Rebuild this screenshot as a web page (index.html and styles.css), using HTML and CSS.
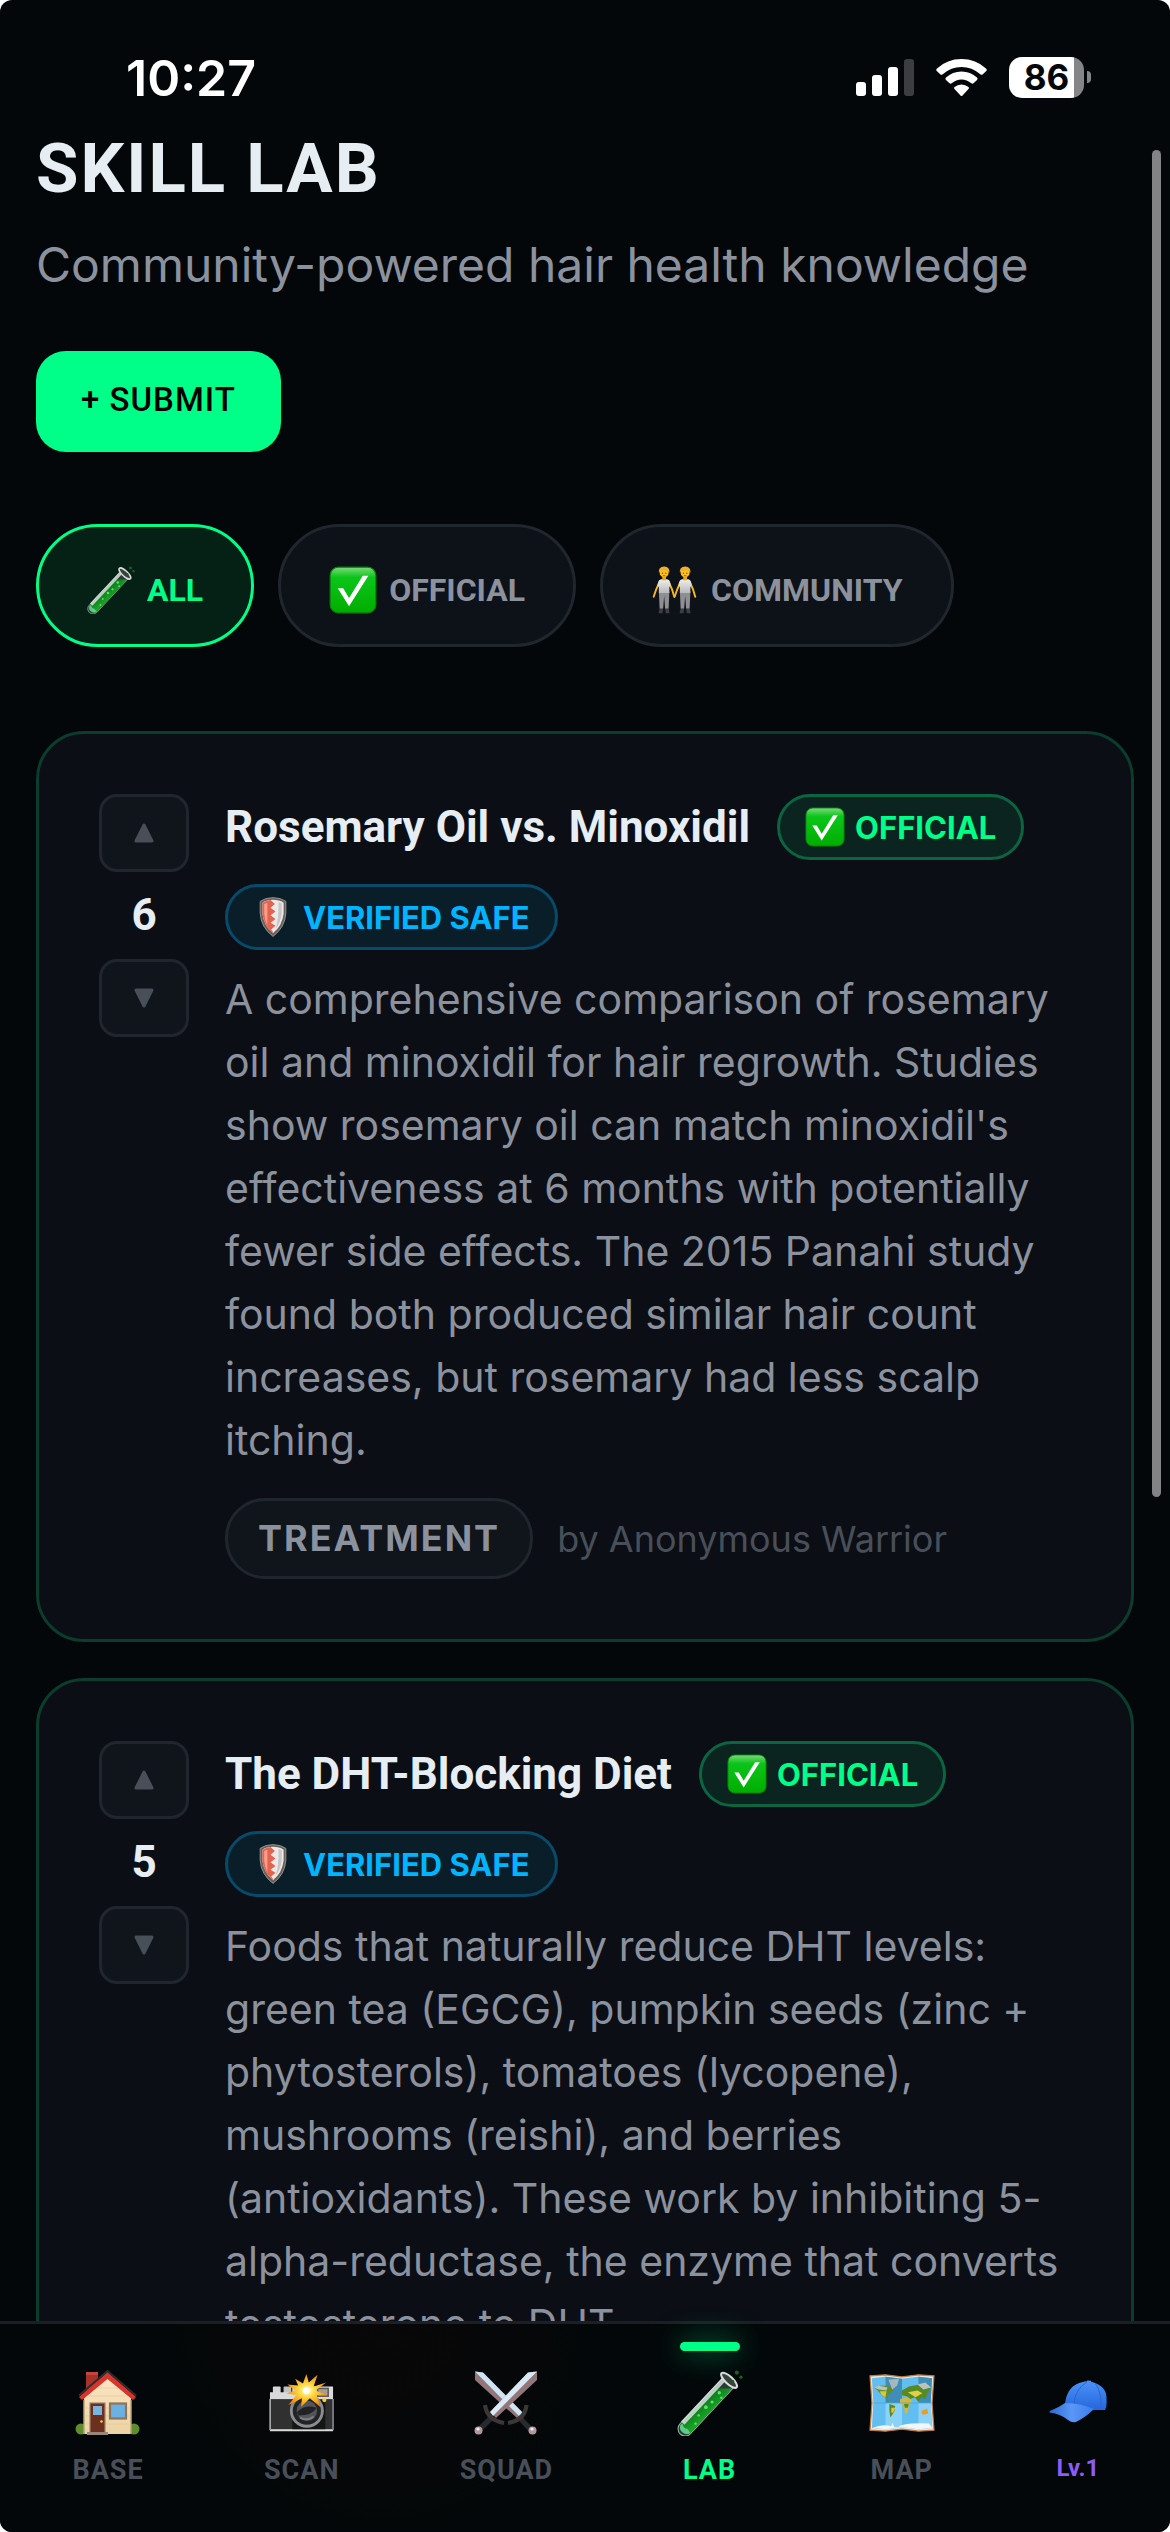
FILE: index.html
```html
<!DOCTYPE html>
<html lang="en">
<head>
  <meta charset="UTF-8">
  <meta name="viewport" content="width=device-width, initial-scale=1">
  <title>Skill Lab</title>
  <link rel="stylesheet" href="styles.css">
</head>
<body>
  <!-- icon sprite -->
  <svg class="sprite" aria-hidden="true">
    <defs>
      <linearGradient id="gGreen" x1="0" y1="0" x2="0" y2="1">
        <stop offset="0" stop-color="#7edb7e"/><stop offset="0.22" stop-color="#0cc51a"/><stop offset="1" stop-color="#00ad00"/>
      </linearGradient>
      <linearGradient id="gLiquid" x1="0" y1="0" x2="1" y2="1">
        <stop offset="0.3" stop-color="#066a20"/><stop offset="0.75" stop-color="#27d327"/>
      </linearGradient>
      <linearGradient id="gShirt" x1="0" y1="0" x2="0" y2="1">
        <stop offset="0" stop-color="#efefef"/><stop offset="1" stop-color="#b9b9bd"/>
      </linearGradient>
      <linearGradient id="gWall" x1="0" y1="0" x2="0" y2="1">
        <stop offset="0" stop-color="#fbe6c2"/><stop offset="1" stop-color="#ecd3a5"/>
      </linearGradient>
      <radialGradient id="gFlash">
        <stop offset="0" stop-color="#fff"/><stop offset="0.35" stop-color="#ffe04a"/><stop offset="1" stop-color="#f58a07"/>
      </radialGradient>
      <linearGradient id="gCap" x1="0" y1="0" x2="0" y2="1">
        <stop offset="0" stop-color="#4a92f7"/><stop offset="1" stop-color="#2566dc"/>
      </linearGradient>
      <linearGradient id="gBrim" x1="0" y1="0" x2="1" y2="0">
        <stop offset="0" stop-color="#2c69d6"/><stop offset="0.5" stop-color="#5b97f6"/><stop offset="1" stop-color="#3b7cec"/>
      </linearGradient>
    </defs>

    <symbol id="i-tube" viewBox="0 0 64 64">
      <path d="M44.9 7.2L2.9 52.2A7 7 0 0 0 13.1 61.8L55.1 16.8Z" fill="#2b3b35" stroke="#9fb5aa" stroke-width="1"/>
      <path d="M38 18H53.5L13 61A6.4 6.4 0 0 1 3.8 52.5Z" fill="url(#gLiquid)"/>
      <path d="M3.4 53A6.6 6.6 0 0 0 13 61L10 57Q6 57 5.5 52Z" fill="#62c98c"/>
      <path d="M5.5 51.5L45 9.5" stroke="#dfece4" stroke-width="4.5" opacity="0.8"/>
      <ellipse cx="50.5" cy="10" rx="10" ry="3.6" transform="rotate(43 50.5 10)" fill="#38413d" stroke="#dcdcdc" stroke-width="2"/>
      <g fill="#5ce25c"><circle cx="41" cy="22" r="1.7"/><circle cx="34" cy="31" r="1.5"/><circle cx="28" cy="36" r="1.8"/><circle cx="21" cy="44" r="1.2"/><circle cx="18" cy="52" r="1.2"/><circle cx="43" cy="27" r="1.2"/></g>
      <g fill="#1f5c27"><circle cx="58" cy="2.5" r="2"/><circle cx="62" cy="7" r="1.6"/><circle cx="54" cy="11" r="1.5"/></g>
    </symbol>

    <symbol id="i-check" viewBox="0 0 64 64">
      <rect x="1.5" y="1.5" width="61" height="61" rx="11" fill="url(#gGreen)" stroke="#087f0b" stroke-width="1.5"/>
      <path d="M11.7 29.7H19L26.7 42.7L45 13H52.5L26.7 53.5Z" fill="#fff"/>
    </symbol>

    <symbol id="i-person" viewBox="0 0 32 64">
      <path d="M10 20L5 31L1.5 41" fill="none" stroke="#f5b81d" stroke-width="2.6" stroke-linecap="round"/>
      <path d="M21 20L26 31L29 41" fill="none" stroke="#f5b81d" stroke-width="2.6" stroke-linecap="round"/>
      <path d="M8.5 34H22.5L21.5 57H16.8L15.5 40L14.2 57H9.5Z" fill="#8f8f93"/>
      <path d="M11.5 17.5H19.5Q23 17.5 24.5 26L22.5 28V36H8.5V28L6.5 26Q8 17.5 11.5 17.5Z" fill="url(#gShirt)"/>
      <path d="M9.5 57H14L13.5 63H8ZM17 57H21.5L23 63H17.5Z" fill="#3e3e42"/>
      <path d="M13 13H18V19H13Z" fill="#e9a71a"/>
      <circle cx="15.5" cy="9" r="6" fill="#fcc21b"/>
      <path d="M8.5 9Q7.5 1 15.5 0.5Q23.5 1 22.5 9Q20 4.5 15 6Q10 6 8.5 9Z" fill="#efae2e"/>
      <circle cx="13.3" cy="9.5" r="0.9" fill="#5a3a13"/><circle cx="17.7" cy="9.5" r="0.9" fill="#5a3a13"/>
      <path d="M13.8 13H17.2" stroke="#a2461d" stroke-width="1.2"/>
    </symbol>
    <symbol id="i-people" viewBox="0 0 64 64">
      <use href="#i-person" x="2" y="0" width="32" height="64"/>
      <use href="#i-person" x="30" y="0" width="32" height="64"/>
    </symbol>

    <symbol id="i-shield" viewBox="0 0 44 64">
      <path d="M22 1Q34 1 42.5 7V26Q41 49 22 63Q3 49 1.5 26V7Q10 1 22 1Z" fill="#66605c" stroke="#9c9791" stroke-width="1.5"/>
      <path d="M22 4.5Q32 4.5 39 9V26Q37 46 22 58Q7 46 5 26V9Q12 4.5 22 4.5Z" fill="#ece9e8"/>
      <path d="M18 4.8Q11 5.5 5 9V26Q7 46 22 58V56L19 52L26 46L18 41L26 35L18 29L26 23L18 17L25 11Z" fill="#e2634e"/>
      <path d="M8 11V27Q9 38 13 45V9Z" fill="#ff9c8c"/>
      <path d="M36 10V26Q34 42 26 51Q31 38 31 8Z" fill="#c9c6c6"/>
    </symbol>

    <symbol id="i-house" viewBox="0 0 66 66">
      <rect x="11" y="2" width="12" height="18" fill="#a83228"/><rect x="11" y="2" width="12" height="3" fill="#c4453a"/>
      <circle cx="6" cy="59" r="5.5" fill="#5d8d2c"/><circle cx="59" cy="59" r="5.5" fill="#5d8d2c"/>
      <path d="M32.5 7L56 28V64H9V28Z" fill="url(#gWall)"/>
      <path d="M9 30V64M56 30V64" stroke="#b99f77" stroke-width="1.5"/>
      <path d="M9 38H56M9 46H56M9 54H56M14 26H50M22 18H43" stroke="#e0c69b" stroke-width="0.6"/>
      <path d="M4 27L32.5 2L61 27L58 30L32.5 9L7 30Z" fill="#d8342c"/>
      <path d="M4 25.5L32.5 1L61 25.5" fill="none" stroke="#322c2d" stroke-width="2"/>
      <rect x="15" y="33" width="15" height="30" fill="#6d2f1e" stroke="#a18672" stroke-width="1.2"/>
      <rect x="18" y="36" width="9" height="9" fill="#78b6e2"/><circle cx="26.5" cy="51.5" r="1.3" fill="#ffc93b"/>
      <rect x="12" y="62" width="21" height="3" fill="#97877a"/>
      <rect x="35" y="33.5" width="16" height="15" fill="#6cb1e3" stroke="#8e7458" stroke-width="2.2"/>
    </symbol>

    <symbol id="i-camera" viewBox="0 0 68 66">
      <rect x="4" y="16" width="8" height="7" rx="1" fill="#d6d6d6"/><rect x="15" y="16" width="8" height="7" rx="1" fill="#c2c2c2"/>
      <path d="M1 22H24V16H66V62H1Z" fill="#d9dadb"/>
      <rect x="2" y="29" width="64" height="31" fill="#303031"/>
      <path d="M1 29V61M66 29V61" stroke="#909294" stroke-width="1.5"/>
      <rect x="24" y="30" width="34" height="30" fill="#151516"/>
      <circle cx="39" cy="41" r="16" fill="#222326" stroke="#8b8d90" stroke-width="3"/>
      <circle cx="39" cy="41" r="10.5" fill="#535559"/>
      <path d="M29 42Q38 34 49 38Q45 46 30 46Z" fill="#202226"/>
      <path d="M32 48Q39 52 46 47" stroke="#7b7e84" stroke-width="2" fill="none"/>
      <rect x="50" y="18" width="11" height="8" fill="#a79d91" stroke="#5b5753" stroke-width="1.5"/>
      <circle cx="57" cy="30" r="2.2" fill="#ffc93b"/>
      <path d="M38.5 3L41 12L50 4L46 16L59 12L48 20L60 25L49 25L53 37L42 28L33 37L34 28L20 35L28 25L18 23L27 20L19 14L30 15L27 8L35 13Z" fill="url(#gFlash)"/>
      <circle cx="38.5" cy="20.5" r="3.5" fill="#fff"/>
    </symbol>

    <symbol id="i-swords" viewBox="0 0 66 66">
      <path d="M2 1.5L10 2.5L51 44L44 48L2 10Z" fill="#927679"/>
      <path d="M2 1.5L10 2.5L51 44L46 46Z" fill="#cfe4f1"/>
      <path d="M46 47L58 60" stroke="#26292d" stroke-width="5.5"/>
      <path d="M53.5 35Q52 50 35 53" fill="none" stroke="#3b3736" stroke-width="4.2"/>
      <path d="M64 1.5L55 2.5L17 42L23 48L64 10Z" fill="#927679"/>
      <path d="M64 1.5L55 2.5L17 42L20 46Z" fill="#d8eaf5"/>
      <path d="M19 47L6 60" stroke="#26292d" stroke-width="5.5"/>
      <path d="M12 35Q14 50 31 53" fill="none" stroke="#3b3736" stroke-width="4.2"/>
      <circle cx="5.5" cy="60.5" r="4" fill="#b3989a"/><circle cx="59.5" cy="60.5" r="4" fill="#b3989a"/>
      <circle cx="5" cy="59" r="1.6" fill="#e9eef3"/><circle cx="59" cy="59" r="1.6" fill="#e9eef3"/>
    </symbol>

    <symbol id="i-map" viewBox="0 0 68 66">
      <path d="M1 5L17 4L34 6L51 4L67 5L65 33L67 61L51 62L34 60L17 62L1 61L3 33Z" fill="#ece6d8" stroke="#bd7a41" stroke-width="1.2"/>
      <path d="M3 7.5L17 6L34 8L51 6L65 7.5L63.5 33L65 58.5L51 60L34 58L17 60L3 58.5L4.5 33Z" fill="#62bdf0"/>
      <path d="M17 6L34 8V33H17ZM51 6L65 7.5L63.5 33H51Z" fill="#3f8db9"/>
      <path d="M17 33H34V58L17 60ZM51 33H63.5L65 58.5L51 60Z" fill="#8bd2f8"/>
      <path d="M5 17L12 15L22 16L25 20L20 24L19 28L14 26L9 20Z" fill="#638d27"/>
      <path d="M11 21L18 21L17 27L13 25Z" fill="#d9c83d"/>
      <path d="M20 9L31 8L29 15L24 19Z" fill="#aab6bd"/>
      <path d="M17 28L21 31L19 31ZM21 34L27 36L26 42L22 48L21 41Z" fill="#568b22"/>
      <path d="M23 38L27 38L25 43L23 43Z" fill="#efbf2c"/>
      <path d="M34 20L41 16L52 14L64 17L60 23L58 29L54 27L51 32L47 27L43 29L39 26L34 25Z" fill="#568b22"/>
      <path d="M32 29L39 27L45 31L41 36L40 43L37 44L36 36L32 33Z" fill="#d5b83b"/>
      <path d="M40 22L50 20L55 23L48 27Z" fill="#e2cf4a"/>
      <path d="M36 34L41 34L40 38L37 38Z" fill="#568b22"/>
      <path d="M54 41L60 39L61 44L55 45Z" fill="#f29a1f"/>
      <path d="M5 17L10 15L19 17L18 20L10 19ZM50 14L58 12L64 17L56 19Z" fill="#b9c3bd"/>
      <path d="M4 58.5Q14 54 23 57L24 53L26 58L30 58Q35 53 62 54L65 58.5L51 60L34 58L17 60Z" fill="#f3f6f8"/>
      <path d="M4 33H64" stroke="#4ca6da" stroke-width="0.8"/>
    </symbol>

    <symbol id="i-cap" viewBox="0 0 66 66">
      <path d="M20 34Q22 15 38 12Q41 10.5 47 12Q61 16 61.5 27Q62 38 60 40H48Q34 35 20 34Z" fill="url(#gCap)"/>
      <path d="M29 34Q30 19 42 12M56 39Q57 22 50 13" fill="none" stroke="#2a63c9" stroke-width="0.9"/>
      <path d="M42 11.5L46 11.7" stroke="#4a92f7" stroke-width="2"/>
      <path d="M20 33Q36 33 49 39Q41 47 31 52Q27 53 23 50Q14 43 4.5 42.5Q4 41 7 40Q13 38 20 33Z" fill="url(#gBrim)"/>
    </symbol>
  </svg>

  <div class="app">
    <div class="status-bar">
      <span class="time">10:27</span>
      <div class="status-icons">
        <svg width="58" height="38" viewBox="0 0 58 38" fill="#fff">
          <rect y="23" width="10" height="14" rx="3"/>
          <rect x="16" y="16" width="10" height="21" rx="3"/>
          <rect x="32" y="8" width="10" height="29" rx="3"/>
          <rect x="48" width="10" height="37" rx="3" fill="#3b3d3e"/>
        </svg>
        <svg width="51" height="38" viewBox="0 0 51 38" fill="#fff">
          <path d="M25.5 0Q40 0 50 9.5Q51.5 11 50 12.3L46.5 15.5Q45.5 16.3 44.3 15.3Q36 8 25.5 8T6.7 15.3Q5.5 16.3 4.5 15.5L1 12.3Q-0.5 11 1 9.5Q11 0 25.5 0Z"/>
          <path d="M25.5 12.5Q34.5 12.5 41 18.5Q42.3 19.8 41 21L37.5 24.3Q36.5 25.2 35.3 24.3Q31 20.5 25.5 20.5T15.7 24.3Q14.5 25.2 13.5 24.3L10 21Q8.7 19.8 10 18.5Q16.5 12.5 25.5 12.5Z"/>
          <path d="M25.5 25.5Q29.5 25.5 32.5 28Q33.5 29 32.5 30L26.5 36.5Q25.5 37.5 24.5 36.5L18.5 30Q17.5 29 18.5 28Q21.5 25.5 25.5 25.5Z"/>
        </svg>
        <div class="battery"><span class="battery-level">86</span></div>
      </div>
    </div>

    <main class="content">
      <h1>SKILL LAB</h1>
      <p class="subtitle">Community-powered hair health knowledge</p>
      <button class="submit-btn" type="button">+ SUBMIT</button>

      <div class="filters">
        <button class="chip active" type="button"><svg class="icon"><use href="#i-tube"/></svg>ALL</button>
        <button class="chip" type="button"><svg class="icon"><use href="#i-check"/></svg>OFFICIAL</button>
        <button class="chip" type="button"><svg class="icon"><use href="#i-people"/></svg>COMMUNITY</button>
      </div>

      <div class="cards">
        <article class="card">
          <div class="votes">
            <button type="button" aria-label="Upvote"><svg viewBox="0 0 20 20"><path d="M10 2L18 18H2Z"/></svg></button>
            <span class="count">6</span>
            <button type="button" aria-label="Downvote"><svg viewBox="0 0 20 20"><path d="M2 2H18L10 18Z"/></svg></button>
          </div>
          <div class="card-body">
            <div class="card-head">
              <h2>Rosemary Oil vs. Minoxidil</h2>
              <span class="badge official"><svg class="icon"><use href="#i-check"/></svg>OFFICIAL</span>
              <span class="badge safe"><svg class="icon"><use href="#i-shield"/></svg>VERIFIED SAFE</span>
            </div>
            <p class="desc">A comprehensive comparison of rosemary oil and minoxidil for hair regrowth. Studies show rosemary oil can match minoxidil's effectiveness at 6 months with potentially fewer side effects. The 2015 Panahi study found both produced similar hair count increases, but rosemary had less scalp itching.</p>
            <div class="meta">
              <span class="tag">TREATMENT</span>
              <span class="author">by Anonymous Warrior</span>
            </div>
          </div>
        </article>

        <article class="card">
          <div class="votes">
            <button type="button" aria-label="Upvote"><svg viewBox="0 0 20 20"><path d="M10 2L18 18H2Z"/></svg></button>
            <span class="count">5</span>
            <button type="button" aria-label="Downvote"><svg viewBox="0 0 20 20"><path d="M2 2H18L10 18Z"/></svg></button>
          </div>
          <div class="card-body">
            <div class="card-head">
              <h2>The DHT-Blocking Diet</h2>
              <span class="badge official"><svg class="icon"><use href="#i-check"/></svg>OFFICIAL</span>
              <span class="badge safe"><svg class="icon"><use href="#i-shield"/></svg>VERIFIED SAFE</span>
            </div>
            <p class="desc">Foods that naturally reduce DHT levels: green tea (EGCG), pumpkin seeds (zinc + phytosterols), tomatoes (lycopene), mushrooms (reishi), and berries (antioxidants). These work by inhibiting 5-alpha-reductase, the enzyme that converts testosterone to DHT.</p>
          </div>
        </article>
      </div>
    </main>

    <div class="scroll-thumb"></div>

    <nav class="tab-bar">
      <a href="#base"><svg class="icon"><use href="#i-house"/></svg><span>BASE</span></a>
      <a href="#scan"><svg class="icon"><use href="#i-camera"/></svg><span>SCAN</span></a>
      <a href="#squad"><svg class="icon"><use href="#i-swords"/></svg><span>SQUAD</span></a>
      <a href="#lab" class="active" aria-current="page"><svg class="icon"><use href="#i-tube"/></svg><span>LAB</span></a>
      <a href="#map"><svg class="icon"><use href="#i-map"/></svg><span>MAP</span></a>
      <a href="#level" class="level"><svg class="icon"><use href="#i-cap"/></svg><span>Lv.1</span></a>
    </nav>
  </div>
</body>
</html>
```

FILE: styles.css
```css
* {
  box-sizing: border-box;
}
html {
  background: #fff;
}
body {
  margin: 0;
  font-family: Inter, "Liberation Sans", sans-serif;
  color: #e6edf3;
}
h1, h2, p {
  margin: 0;
}
button {
  font-family: inherit;
  cursor: pointer;
}
.sprite {
  position: absolute;
  width: 0;
  height: 0;
}
.icon {
  display: block;
  flex: none;
}
.app {
  position: relative;
  display: flex;
  flex-direction: column;
  height: 100vh;
  overflow: hidden;
  border-radius: 12px;
  background: #030709;
}

/* status bar */
.status-bar {
  flex: none;
  display: flex;
  justify-content: space-between;
  align-items: center;
  height: 128px;
  padding: 27px 86px 0 126px;
}
.time {
  font-size: 50px;
  font-weight: 600;
  color: #fff;
}
.status-icons {
  display: flex;
  align-items: center;
  gap: 22px;
}
.battery {
  position: relative;
  width: 75px;
  height: 41px;
  border-radius: 13px;
  background: linear-gradient(to right, #fff 65px, #848586 65px);
  color: #030709;
}
.battery::after {
  content: "";
  position: absolute;
  left: 78px;
  top: 14px;
  width: 4px;
  height: 12px;
  border-radius: 0 4px 4px 0;
  background: #848586;
}
.battery-level {
  display: block;
  line-height: 41px;
  font-size: 35px;
  font-weight: 700;
  text-align: center;
}

/* page */
.content {
  flex: 1;
  min-height: 0;
  overflow-y: auto;
  scrollbar-width: none;
  padding: 0 36px;
}
h1 {
  font-family: Roboto, sans-serif;
  font-size: 69px;
  line-height: 82px;
  font-weight: 700;
  letter-spacing: 2px;
}
.subtitle {
  margin-top: 19px;
  font-size: 48px;
  line-height: 72px;
  color: #8b929e;
}
.submit-btn {
  display: block;
  height: 101px;
  margin-top: 50px;
  padding: 0 45px 4px;
  border: 0;
  border-radius: 30px;
  background: #00ff88;
  color: #000;
  font-family: Roboto, sans-serif;
  font-size: 33px;
  font-weight: 500;
  letter-spacing: 1px;
}
.filters {
  display: flex;
  gap: 24px;
  margin-top: 72px;
}
.chip {
  display: flex;
  align-items: center;
  gap: 12px;
  height: 123px;
  padding: 8px 48px 0;
  border: 3px solid #20262d;
  border-radius: 62px;
  background: #0d1118;
  color: #8b929e;
  font-family: Roboto, sans-serif;
  font-size: 32px;
  font-weight: 700;
}
.chip.active {
  border-color: #00ff88;
  background: #052015;
  color: #00ff88;
}
.chip .icon {
  width: 48px;
  height: 48px;
}

/* cards */
.cards {
  display: flex;
  flex-direction: column;
  gap: 36px;
  margin-top: 84px;
  padding-bottom: 36px;
}
.card {
  display: flex;
  gap: 36px;
  padding: 60px;
  border: 3px solid #0a3d2b;
  border-radius: 48px;
  background: #0b0e15;
}
.votes {
  flex: none;
  width: 90px;
}
.votes button {
  display: flex;
  align-items: center;
  justify-content: center;
  width: 90px;
  height: 78px;
  padding: 0;
  border: 3px solid #20262d;
  border-radius: 18px;
  background: #10141b;
}
.votes svg {
  width: 20px;
  height: 20px;
  fill: #484f58;
  stroke: #484f58;
  stroke-width: 3;
  stroke-linejoin: round;
}
.count {
  display: block;
  margin: 12px 0;
  font-family: Roboto, sans-serif;
  font-size: 44px;
  line-height: 63px;
  font-weight: 700;
  text-align: center;
}
.card-body {
  flex: 1;
  min-width: 0;
}
.card-head {
  display: flex;
  flex-wrap: wrap;
  align-items: center;
  gap: 24px 27px;
}
h2 {
  font-family: Roboto, sans-serif;
  font-size: 44px;
  line-height: 66px;
  font-weight: 700;
}
.badge {
  display: flex;
  align-items: center;
  gap: 10px;
  height: 66px;
  padding: 0 25px;
  border: 3px solid;
  border-radius: 33px;
  font-size: 31px;
  font-weight: 700;
}
.badge .icon {
  width: 40px;
  height: 40px;
}
.badge.official {
  border-color: #0a6540;
  background: #0b2420;
  color: #00ff88;
}
.badge.safe {
  border-color: #074a69;
  background: #0a1e29;
  color: #00b4ff;
}
.desc {
  margin-top: 18px;
  font-size: 41px;
  line-height: 63px;
  color: #8b929e;
}
.meta {
  display: flex;
  align-items: center;
  gap: 24px;
  margin-top: 26px;
  font-size: 36px;
}
.tag {
  padding: 0 30px;
  border: 3px solid #20262d;
  border-radius: 40px;
  background: #10141b;
  color: #8b929e;
  line-height: 75px;
  font-weight: 700;
  letter-spacing: 2px;
}
.author {
  color: #484f58;
}

.scroll-thumb {
  position: absolute;
  top: 150px;
  right: 9px;
  width: 9px;
  height: 1347px;
  border-radius: 5px;
  background: #828384;
}

/* bottom navigation */
.tab-bar {
  flex: none;
  display: grid;
  grid-template-columns: 192fr 195fr 214fr 192fr 192fr 160fr;
  height: 211px;
  padding: 0 12px;
  border-top: 3px solid #1a2025;
  background: radial-gradient(circle at 380px 0, #090708, #030709 250px);
}
.tab-bar a {
  position: relative;
  display: flex;
  flex-direction: column;
  align-items: center;
  gap: 16px;
  padding-top: 46px;
  color: #484f58;
  font-family: Roboto, sans-serif;
  font-size: 27px;
  line-height: 36px;
  font-weight: 700;
  letter-spacing: 1px;
  text-decoration: none;
}
.tab-bar .icon {
  width: 66px;
  height: 66px;
}
.tab-bar a.active {
  color: #00ff88;
}
.tab-bar a.active::before {
  content: "";
  position: absolute;
  top: 18px;
  left: 50%;
  width: 60px;
  height: 9px;
  margin-left: -30px;
  border-radius: 5px;
  background: #00ff88;
  box-shadow: 0 0 30px rgba(0, 255, 136, 0.6);
}
.tab-bar a.level {
  gap: 14px;
  color: #8b5cf6;
  font-size: 24px;
  letter-spacing: 0;
}
```
